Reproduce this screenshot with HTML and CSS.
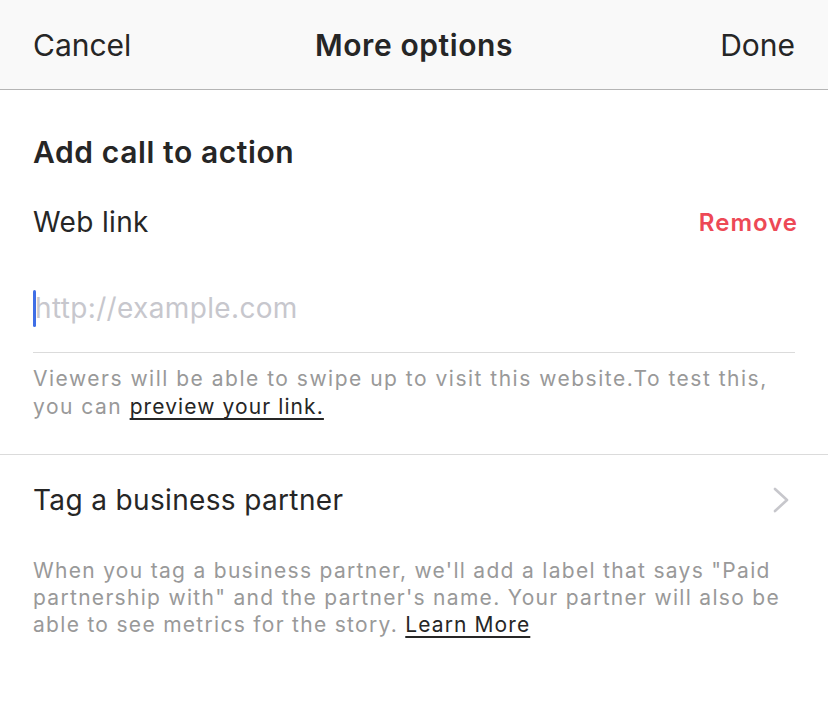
FILE: index.html
```html
<!DOCTYPE html>
<html lang="en">
<head>
<meta charset="utf-8">
<title>More options</title>
<link rel="stylesheet" href="styles.css">
</head>
<body>
<header class="nav">
  <span class="nav-btn nav-left">Cancel</span>
  <span class="nav-title">More options</span>
  <span class="nav-btn nav-right">Done</span>
</header>
<main>
  <section class="cta">
    <h2 class="cta-title">Add call to action</h2>
    <div class="row-head">
      <span class="label">Web link</span>
      <span class="remove">Remove</span>
    </div>
    <div class="field">
      <span class="caret"></span>
      <span class="placeholder">http://example.com</span>
    </div>
    <p class="help">Viewers will be able to swipe up to visit this website.To test this, you can <span class="link">preview your link.</span></p>
  </section>
  <section class="partner">
    <div class="partner-row">
      <span class="label">Tag a business partner</span>
      <svg class="chev" width="18" height="28" viewBox="0 0 18 28"><polyline points="3,3 15,14 3,25" fill="none" stroke="#c7c7cc" stroke-width="2.6" stroke-linecap="round" stroke-linejoin="round"/></svg>
    </div>
    <p class="help help-partner">When you tag a business partner, we'll add a label that says "Paid partnership with" and the partner's name. Your partner will also be able to see metrics for the story. <span class="link">Learn More</span></p>
  </section>
</main>
</body>
</html>
```
FILE: styles.css
```css
* { box-sizing: border-box; }
html, body { margin: 0; padding: 0; background: #ffffff; }
body {
  font-family: Inter, "Liberation Sans", Arial, sans-serif;
  color: #262626;
  width: 828px;
  height: 711px;
  overflow: hidden;
}
.nav {
  height: 90px;
  background: #f9f9f9;
  border-bottom: 1px solid #b5b5b5;
  display: grid;
  grid-template-columns: 1fr auto 1fr;
  align-items: center;
  padding: 0 33px;
  font-size: 30px;
}
.nav-left { justify-self: start; }
.nav-right { justify-self: end; }
.nav-title { font-weight: 600; letter-spacing: 0.6px; }
.cta { padding: 0 33px; }
.cta-title {
  margin: 44px 0 0;
  font-size: 30px;
  line-height: 36px;
  font-weight: 600;
  letter-spacing: 0.6px;
}
.row-head {
  margin-top: 34px;
  display: flex;
  justify-content: space-between;
  align-items: center;
}
.label { font-size: 28px; line-height: 36px; letter-spacing: 0.35px; }
.remove {
  font-size: 24px;
  font-weight: 600;
  letter-spacing: 1px;
  color: #ed4956;
  margin-right: -3px;
}
.field {
  display: flex;
  align-items: center;
  padding: 50px 0 25px;
  border-bottom: 1px solid #dbdbdb;
}
.caret {
  width: 3px;
  height: 37px;
  background: #3f6ee6;
  border-radius: 2px;
}
.placeholder {
  font-size: 28px;
  line-height: 37px;
  letter-spacing: 0.35px;
  color: #c7c7cd;
  margin-left: -1px;
}
.help {
  margin: 12px 0 0;
  font-size: 21px;
  line-height: 28px;
  letter-spacing: 1.5px;
  color: #999999;
  padding-bottom: 33px;
}
.link {
  color: #262626;
  letter-spacing: 1.1px;
  text-decoration: underline;
  text-decoration-thickness: 2px;
  text-underline-offset: 4px;
}
.partner { border-top: 1px solid #dbdbdb; padding: 0 33px; }
.partner-row {
  margin-top: 27px;
  display: flex;
  justify-content: space-between;
  align-items: center;
}
.chev { margin-right: 5px; }
.help-partner { margin-top: 39px; padding-bottom: 0; line-height: 27px; letter-spacing: 1.3px; }
```
